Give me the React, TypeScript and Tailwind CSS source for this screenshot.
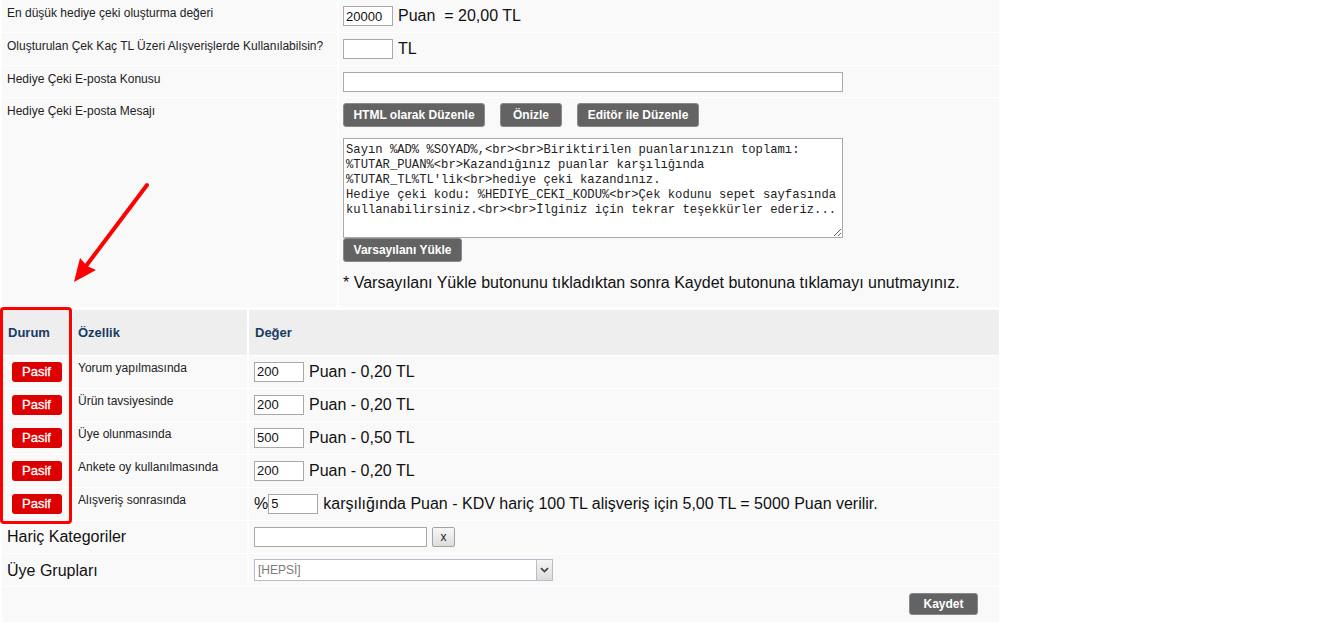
import React from "react";

const font = "font-['Liberation_Sans',Arial,sans-serif]";

function TopRow({
  label,
  children,
  h,
}: {
  label: string;
  children?: React.ReactNode;
  h: string;
}) {
  return (
    <div className={`flex gap-[2px] border-b border-white ${h}`}>
      <div className="w-[335px] shrink-0 bg-[#f9f9f9] px-[5px] pt-[6px] text-[12px] leading-[14px] text-[#222]">
        {label}
      </div>
      <div className="flex-1 bg-[#f9f9f9] px-[4px] pt-[6px]">{children}</div>
    </div>
  );
}

function GrayButton({ label, w, h = "h-[24px]" }: { label: string; w: string; h?: string }) {
  return (
    <button
      className={`${w} ${h} block rounded-[3px] border border-[#8a8a8a] bg-[#636363] text-[12px] font-bold text-white`}
    >
      {label}
    </button>
  );
}

function SmallInput({ value, w = "w-[50px]" }: { value?: string; w?: string }) {
  return (
    <input
      readOnly
      defaultValue={value}
      className={`${w} block h-[20px] shrink-0 border border-[#a9a9a9] bg-white px-[2px] text-[13px] text-[#111] outline-none`}
    />
  );
}

const features = [
  { name: "Yorum yapılmasında", value: "200", text: "Puan - 0,20 TL" },
  { name: "Ürün tavsiyesinde", value: "200", text: "Puan - 0,20 TL" },
  { name: "Üye olunmasında", value: "500", text: "Puan - 0,50 TL" },
  { name: "Ankete oy kullanılmasında", value: "200", text: "Puan - 0,20 TL" },
];

const message = `Sayın %AD% %SOYAD%,<br><br>Biriktirilen puanlarınızın toplamı:
%TUTAR_PUAN%<br>Kazandığınız puanlar karşılığında
%TUTAR_TL%TL'lik<br>hediye çeki kazandınız.
Hediye çeki kodu: %HEDIYE_CEKI_KODU%<br>Çek kodunu sepet sayfasında
kullanabilirsiniz.<br><br>İlginiz için tekrar teşekkürler ederiz...`;

function FeatureRow({ children, name }: { children: React.ReactNode; name: string }) {
  return (
    <div className="flex h-[33px] gap-[2px] border-b border-white">
      <div className="flex w-[69px] shrink-0 justify-center bg-[#f9f9f9] pt-[6px]">
        <button className="h-[20px] w-[50px] rounded-[3px] bg-[#dd0000] text-[13px] text-white [-webkit-text-stroke:0.3px_white]">
          Pasif
        </button>
      </div>
      <div className="w-[174px] shrink-0 bg-[#f9f9f9] pl-[5px] pt-[5px] text-[12px] leading-[14px] text-[#222]">
        {name}
      </div>
      <div className="flex flex-1 items-start bg-[#f9f9f9] pl-[5px] pt-[6px] text-[16px] leading-[20px] text-[#111]">
        {children}
      </div>
    </div>
  );
}

export default function App() {
  return (
    <div className={`relative h-[630px] w-[1340px] bg-white ${font}`}>
      <div className="ml-[2px] w-[997px]">
        <TopRow label="En düşük hediye çeki oluşturma değeri" h="h-[33px]">
          <div className="flex items-start">
            <SmallInput value="20000" />
            <span className="ml-[5px] whitespace-pre text-[16px] leading-[20px] text-[#111]">Puan  = 20,00 TL</span>
          </div>
        </TopRow>
        <TopRow label="Oluşturulan Çek Kaç TL Üzeri Alışverişlerde Kullanılabilsin?" h="h-[33px]">
          <div className="flex items-start">
            <SmallInput />
            <span className="ml-[5px] text-[16px] leading-[20px] text-[#111]">TL</span>
          </div>
        </TopRow>
        <TopRow label="Hediye Çeki E-posta Konusu" h="h-[32px]">
          <SmallInput w="w-[500px]" />
        </TopRow>
        <TopRow label="Hediye Çeki E-posta Mesajı" h="h-[210px]">
          <div className="-mt-[1px] flex gap-[15px]">
            <GrayButton label="HTML olarak Düzenle" w="w-[142px]" />
            <GrayButton label="Önizle" w="w-[62px]" />
            <GrayButton label="Editör ile Düzenle" w="w-[122px]" />
          </div>
          <textarea
            readOnly
            defaultValue={message}
            wrap="off"
            className="mt-[11px] block h-[100px] w-[500px] overflow-hidden border border-[#a9a9a9] bg-white px-[2px] py-[4px] font-['Liberation_Mono',monospace] text-[12.2px] leading-[15px] text-[#222] outline-none"
          />
          <GrayButton label="Varsayılanı Yükle" w="w-[119px]" />
          <div className="mt-[12px] text-[16px] leading-[18px] text-[#111]">
            * Varsayılanı Yükle butonunu tıkladıktan sonra Kaydet butonuna tıklamayı unutmayınız.
          </div>
        </TopRow>

        <div className="mt-[2px] flex h-[46px] gap-[2px] border-b border-white text-[13px] font-bold text-[#163c66]">
          <div className="flex w-[69px] shrink-0 items-center bg-[#eeeeee] pl-[6px]">Durum</div>
          <div className="flex w-[174px] shrink-0 items-center bg-[#eeeeee] pl-[5px]">Özellik</div>
          <div className="flex flex-1 items-center bg-[#eeeeee] pl-[6px]">Değer</div>
        </div>

        {features.map((f) => (
          <FeatureRow key={f.name} name={f.name}>
            <SmallInput value={f.value} />
            <span className="ml-[5px]">{f.text}</span>
          </FeatureRow>
        ))}
        <FeatureRow name="Alışveriş sonrasında">
          <span>%</span>
          <SmallInput value="5" />
          <span className="ml-[5px]">
            karşılığında Puan - KDV hariç 100 TL alişveriş için 5,00 TL = 5000 Puan verilir.
          </span>
        </FeatureRow>

        <div className="flex h-[33px] gap-[2px] border-b border-white">
          <div className="w-[245px] shrink-0 bg-[#f9f9f9] pl-[5px] pt-[6px] text-[16px] leading-[20px] text-[#111]">
            Hariç Kategoriler
          </div>
          <div className="flex flex-1 items-start gap-[5px] bg-[#f9f9f9] pl-[5px] pt-[6px]">
            <SmallInput w="w-[173px]" />
            <button className="h-[20px] w-[23px] rounded-[2px] border border-[#a3a3a3] bg-gradient-to-b from-[#f7f7f7] to-[#dcdcdc] text-[12px] leading-[16px] text-[#222]">
              x
            </button>
          </div>
        </div>

        <div className="flex h-[33px] gap-[2px] border-b border-white">
          <div className="w-[245px] shrink-0 bg-[#f9f9f9] pl-[5px] pt-[7px] text-[16px] leading-[20px] text-[#111]">
            Üye Grupları
          </div>
          <div className="flex-1 bg-[#f9f9f9] pl-[5px] pt-[5px]">
            <div className="flex h-[22px] w-[299px] border border-[#b9bccd] bg-white">
              <div className="flex-1 pl-[3px] text-[12px] leading-[20px] text-[#7a7a7a]">[HEPSİ]</div>
              <div className="flex w-[16px] items-center justify-center border-l border-[#b9bccd] bg-gradient-to-b from-[#f4f4f4] to-[#dcdcdc]">
                <svg width="9" height="6" viewBox="0 0 9 6">
                  <path d="M1 1.2 L4.5 4.6 L8 1.2" fill="none" stroke="#444" strokeWidth="1.8" />
                </svg>
              </div>
            </div>
          </div>
        </div>

        <div className="flex h-[35px] justify-end bg-[#f9f9f9] pr-[21px] pt-[6px]">
          <GrayButton label="Kaydet" w="w-[69px]" h="h-[22px]" />
        </div>
      </div>

      {/* highlight around the Durum column */}
      <div className="pointer-events-none absolute left-0 top-[307px] h-[217px] w-[72px] rounded-[4px] border-[3px] border-[#ff0000]" />

      <svg className="pointer-events-none absolute left-0 top-0" width="200" height="300" viewBox="0 0 200 300">
        <line x1="147" y1="185" x2="86" y2="266" stroke="#ff0000" strokeWidth="4" strokeLinecap="round" />
        <polygon points="74,282 80,258 87,266 96,270" fill="#ff0000" />
      </svg>
    </div>
  );
}
